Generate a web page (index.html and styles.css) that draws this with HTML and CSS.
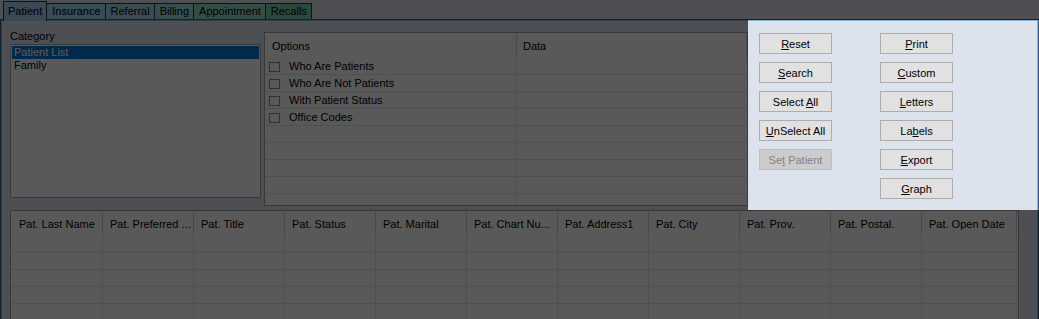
FILE: index.html
```html
<!DOCTYPE html>
<html lang="en">
<head>
    <meta charset="UTF-8">
    <meta name="viewport" content="width=device-width, initial-scale=1.0">
    <title>Patient Reports</title>
    <link rel="stylesheet" href="styles.css">
</head>
<body>
    <div class="tabs">
        <div class="tab tab-patient active">Patient</div>
        <div class="tab tab-insurance">Insurance</div>
        <div class="tab tab-referral">Referral</div>
        <div class="tab tab-billing">Billing</div>
        <div class="tab tab-appointment">Appointment</div>
        <div class="tab tab-recalls">Recalls</div>
    </div>

    <div class="frame">
        <div class="top">
            <div class="category">
                <div class="label">Category</div>
                <ul class="listbox">
                    <li class="selected">Patient List</li>
                    <li>Family</li>
                </ul>
            </div>

            <div class="options">
                <table>
                    <thead>
                        <tr><th class="opt-col">Options</th><th class="data-col">Data</th></tr>
                    </thead>
                    <tbody>
                        <tr><td><span class="check"></span>Who Are Patients</td><td></td></tr>
                        <tr><td><span class="check"></span>Who Are Not Patients</td><td></td></tr>
                        <tr><td><span class="check"></span>With Patient Status</td><td></td></tr>
                        <tr><td><span class="check"></span>Office Codes</td><td></td></tr>
                        <tr><td></td><td></td></tr>
                        <tr><td></td><td></td></tr>
                        <tr><td></td><td></td></tr>
                        <tr><td></td><td></td></tr>
                        <tr><td></td><td></td></tr>
                    </tbody>
                </table>
            </div>

            <div class="actions">
                <!-- highlight that dims the rest of the window -->
                <div class="spotlight"></div>
                <div class="btn-col">
                    <button class="btn"><u>R</u>eset</button>
                    <button class="btn"><u>S</u>earch</button>
                    <button class="btn">Select <u>A</u>ll</button>
                    <button class="btn"><u>U</u>nSelect All</button>
                    <button class="btn" disabled>Se<u>t</u> Patient</button>
                </div>
                <div class="btn-col">
                    <button class="btn"><u>P</u>rint</button>
                    <button class="btn"><u>C</u>ustom</button>
                    <button class="btn"><u>L</u>etters</button>
                    <button class="btn">La<u>b</u>els</button>
                    <button class="btn"><u>E</u>xport</button>
                    <button class="btn"><u>G</u>raph</button>
                </div>
            </div>
        </div>

        <div class="results">
            <table>
                <thead>
                    <tr>
                        <th>Pat. Last Name</th>
                        <th>Pat. Preferred ...</th>
                        <th>Pat. Title</th>
                        <th>Pat. Status</th>
                        <th>Pat. Marital</th>
                        <th>Pat. Chart Nu...</th>
                        <th>Pat. Address1</th>
                        <th>Pat. City</th>
                        <th>Pat. Prov.</th>
                        <th>Pat. Postal.</th>
                        <th>Pat. Open Date</th>
                    </tr>
                </thead>
                <tbody>
                    <tr><td></td><td></td><td></td><td></td><td></td><td></td><td></td><td></td><td></td><td></td><td></td></tr>
                    <tr><td></td><td></td><td></td><td></td><td></td><td></td><td></td><td></td><td></td><td></td><td></td></tr>
                    <tr><td></td><td></td><td></td><td></td><td></td><td></td><td></td><td></td><td></td><td></td><td></td></tr>
                    <tr><td></td><td></td><td></td><td></td><td></td><td></td><td></td><td></td><td></td><td></td><td></td></tr>
                    <tr><td></td><td></td><td></td><td></td><td></td><td></td><td></td><td></td><td></td><td></td><td></td></tr>
                    <tr><td></td><td></td><td></td><td></td><td></td><td></td><td></td><td></td><td></td><td></td><td></td></tr>
                </tbody>
            </table>
        </div>
    </div>
</body>
</html>
```

FILE: styles.css
```css
* {
    box-sizing: border-box;
}
body {
    font-family: "Liberation Sans", Arial, sans-serif;
    font-size: 11px;
    color: #000;
    background-color: #dce3ed;
    margin: 0;
    padding: 0;
    overflow: hidden;
}

/* tab strip */
.tabs {
    display: flex;
    align-items: flex-end;
    height: 19px;
    padding-left: 3px;
}
.tab {
    height: 16px;
    line-height: 15px;
    padding: 0 4px 0 5px;
    border: 1px solid #1f3a4e;
    border-bottom: none;
}
.tab + .tab {
    margin-left: -1px;
}
.tab.active {
    position: relative;
    z-index: 1;
    height: 20px;
    margin-bottom: -2px;
    padding: 0 4px;
    line-height: 19px;
}
.tab-patient { background-color: #a6d2f0; }
.tab-insurance { background-color: #a4d6ee; }
.tab-referral { background-color: #a6daec; }
.tab-billing { background-color: #a2e0dc; }
.tab-appointment { background-color: #96dcc4; }
.tab-recalls { background-color: #76d0a8; }

/* tab page */
.frame {
    border: 1px solid #2f5f86;
    padding: 1px;
    box-shadow: inset 0 0 0 1px #8cb2d8;
    height: 310px;
}
.top {
    display: flex;
    height: 189px;
}

.category {
    margin-left: 8px;
    width: 251px;
    padding-top: 9px;
}
.label {
    line-height: 13px;
}
.listbox {
    list-style: none;
    margin: 1px 0 0;
    padding: 1px;
    height: 154px;
    border: 1px solid #a4a4a4;
    background-color: #fff;
}
.listbox li {
    height: 13px;
    line-height: 13px;
    padding-left: 2px;
}
.listbox li.selected {
    background-color: #0078d7;
    color: #fff;
}

.options {
    margin: 11px 0 0 3px;
    width: 484px;
    height: 174px;
    border: 1px solid #a4a4a4;
    background-color: #fff;
    overflow: hidden;
}
.options table,
.results table {
    border-collapse: separate;
    border-spacing: 0;
    table-layout: fixed;
}
.options table {
    width: 482px;
}
.options th {
    height: 25px;
    padding: 0 0 0 7px;
    text-align: left;
    font-weight: normal;
    border-right: 1px solid #d4d4d4;
}
.options .opt-col {
    width: 252px;
}
.options .data-col {
    padding-left: 6px;
}
.options td {
    height: 17px;
    padding: 0 0 0 4px;
    border-bottom: 1px solid #e4e4e4;
    white-space: nowrap;
}
.options td:first-child {
    border-right: 1px solid #e4e4e4;
}
.check {
    display: inline-block;
    width: 11px;
    height: 10px;
    margin-right: 9px;
    vertical-align: -2px;
    border: 1px solid #8a8a8a;
    background-color: #fff;
}

/* buttons */
.actions {
    position: relative;
    flex: 1;
    display: flex;
    gap: 48px;
    padding: 12px 0 0 11px;
}
.spotlight {
    position: absolute;
    top: -1px;
    left: 0;
    right: -3px;
    bottom: 0;
    z-index: 10;
    pointer-events: none;
    box-shadow: 0 0 0 3000px rgba(0, 0, 0, 0.65);
}
.btn-col {
    display: flex;
    flex-direction: column;
    gap: 8px;
}
.btn {
    width: 73px;
    height: 21px;
    padding: 0;
    font-family: inherit;
    font-size: 11px;
    color: #000;
    background-color: #e1e1e1;
    border: 1px solid #adadad;
    border-radius: 0;
}
.btn:disabled {
    color: #838383;
    background-color: #cccccc;
    border-color: #bfbfbf;
}

/* result grid */
.results {
    margin-left: 8px;
    width: 1009px;
    height: 120px;
    border: 1px solid #a0a0a0;
    background-color: #fff;
    overflow: hidden;
}
.results table {
    width: 1006px;
}
.results th {
    width: 91px;
    height: 25px;
    padding: 0 0 0 7px;
    text-align: left;
    font-weight: normal;
    white-space: nowrap;
    overflow: hidden;
    border-right: 1px solid #d2d2d2;
}
.results th:first-child {
    width: 92px;
    padding-left: 8px;
}
.results th:last-child {
    width: 95px;
}
.results td {
    height: 17px;
    border-right: 1px solid #e4e4e4;
    border-bottom: 1px solid #e4e4e4;
}
```
